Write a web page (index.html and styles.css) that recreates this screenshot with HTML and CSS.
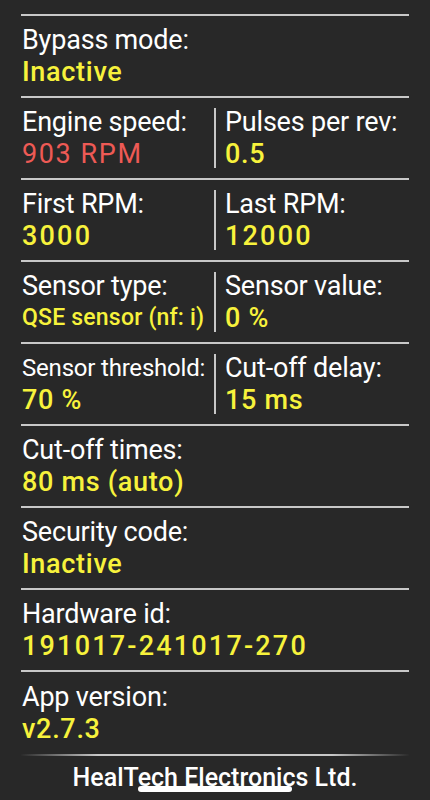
FILE: index.html
```html
<!DOCTYPE html>
<html lang="en">
<head>
    <meta charset="UTF-8">
    <meta name="viewport" content="width=device-width, initial-scale=1.0">
    <title>HealTech - Status</title>
    <link rel="stylesheet" href="styles.css">
</head>
<body>

    <div class="screen">
        <div class="list">
            <!-- la ligne du dessus est coupée par le défilement -->
            <div class="row row-cut"></div>

            <div class="row">
                <div class="cell">
                    <span class="label">Bypass mode:</span>
                    <span class="value">Inactive</span>
                </div>
            </div>

            <div class="row split">
                <div class="cell">
                    <span class="label">Engine speed:</span>
                    <span class="value red">903 RPM</span>
                </div>
                <div class="cell">
                    <span class="label">Pulses per rev:</span>
                    <span class="value">0.5</span>
                </div>
            </div>

            <div class="row split">
                <div class="cell">
                    <span class="label">First RPM:</span>
                    <span class="value num">3000</span>
                </div>
                <div class="cell">
                    <span class="label">Last RPM:</span>
                    <span class="value num">12000</span>
                </div>
            </div>

            <div class="row split">
                <div class="cell">
                    <span class="label">Sensor type:</span>
                    <span class="value small">QSE sensor (nf: i)</span>
                </div>
                <div class="cell">
                    <span class="label">Sensor value:</span>
                    <span class="value">0 %</span>
                </div>
            </div>

            <div class="row split">
                <div class="cell">
                    <span class="label small">Sensor threshold:</span>
                    <span class="value">70 %</span>
                </div>
                <div class="cell">
                    <span class="label">Cut-off delay:</span>
                    <span class="value">15 ms</span>
                </div>
            </div>

            <div class="row">
                <div class="cell">
                    <span class="label">Cut-off times:</span>
                    <span class="value">80 ms (auto)</span>
                </div>
            </div>

            <div class="row">
                <div class="cell">
                    <span class="label">Security code:</span>
                    <span class="value">Inactive</span>
                </div>
            </div>

            <div class="row">
                <div class="cell">
                    <span class="label">Hardware id:</span>
                    <span class="value num">191017-241017-270</span>
                </div>
            </div>

            <div class="row last">
                <div class="cell">
                    <span class="label">App version:</span>
                    <span class="value">v2.7.3</span>
                </div>
            </div>
        </div>

        <footer class="footer">
            <p>HealTech Electronics Ltd.</p>
        </footer>

        <!-- barre d'accueil du téléphone -->
        <div class="home-bar"></div>
    </div>

</body>
</html>
```

FILE: styles.css
```css
:root {
    --background: #282828;
    --line: #c8c8c8;
    --text: #ffffff;
    --yellow: #f7f23c;
    --red: #ee5a55;
}

* {
    box-sizing: border-box;
    margin: 0;
    padding: 0;
}

body {
    font-family: 'Roboto', 'Noto Sans', sans-serif;
    background: var(--background);
    color: var(--text);
    width: 430px;
    height: 800px;
    overflow: hidden;
}

.screen {
    position: relative;
    height: 800px;
}

.list {
    margin: 0 21px;
}

.row {
    display: flex;
    height: 82px;
    border-bottom: 2px solid var(--line);
}

.row-cut {
    height: 16px;
}

.row.last {
    border-bottom: none;
}

.cell {
    flex: 1;
    display: flex;
    flex-direction: column;
    justify-content: center;
    padding-left: 1px;
    white-space: nowrap;
}

.split .cell:first-child {
    flex: 0 0 195px;
    border-right: 2px solid var(--line);
    margin: 10px 0;
}

.split .cell:last-child {
    padding-left: 9px;
}

.label {
    font-size: 27px;
    line-height: 32px;
    font-weight: 400;
    letter-spacing: -0.2px;
}

.label.small {
    font-size: 24px;
}

.value {
    font-size: 27px;
    line-height: 32px;
    font-weight: 500;
    color: var(--yellow);
    letter-spacing: 0.7px;
}

.value.num {
    letter-spacing: 2.2px;
}

.value.small {
    font-size: 23px;
    letter-spacing: 0.2px;
}

.value.red {
    color: var(--red);
    font-weight: 400;
    letter-spacing: 1.6px;
}

.footer {
    margin: 0 21px;
    border-top: 2px solid transparent;
    border-image: linear-gradient(90deg, rgba(200, 200, 200, 0), #c8c8c8 20%, #c8c8c8 80%, rgba(200, 200, 200, 0)) 1;
    text-align: center;
    padding-top: 6px;
}

.footer p {
    font-size: 25px;
    font-weight: 500;
    line-height: 32px;
}

.home-bar {
    position: absolute;
    left: 138px;
    bottom: 8px;
    width: 154px;
    height: 6px;
    border-radius: 3px;
    background: #ffffff;
}
```
